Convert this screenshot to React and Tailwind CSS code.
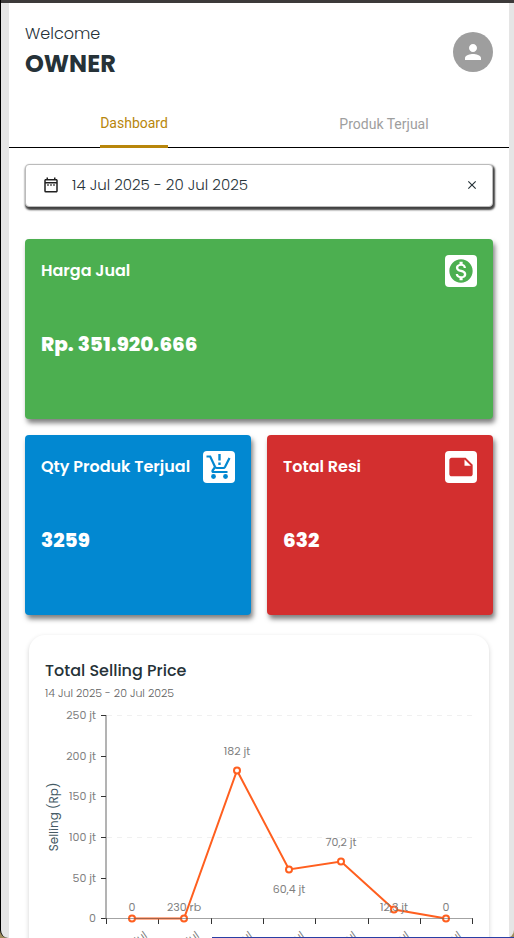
import React from "react";
import { MdPerson, MdMonetizationOn, MdNote, MdClose, MdOutlineDateRange } from "react-icons/md";

const points = [
  { x: 132, y: 918, label: "0", ly: 911 },
  { x: 184, y: 918, label: "230 rb", ly: 911 },
  { x: 237, y: 770, label: "182 jt", ly: 755 },
  { x: 289, y: 869, label: "60,4 jt", ly: 893 },
  { x: 341, y: 861, label: "70,2 jt", ly: 846 },
  { x: 394, y: 909, label: "12,3 jt", ly: 911 },
  { x: 446, y: 918, label: "0", ly: 911 },
];

const days = ["14 Jul", "15 Jul", "16 Jul", "17 Jul", "18 Jul", "19 Jul", "20 Jul"];

const yTicks = [
  { y: 715, label: "250 jt" },
  { y: 756, label: "200 jt" },
  { y: 796, label: "150 jt" },
  { y: 837, label: "100 jt" },
  { y: 878, label: "50 jt" },
  { y: 918, label: "0" },
];

const xTicks = [106, 158, 211, 263, 315, 368, 420, 472];

function OrderIcon() {
  return (
    <svg viewBox="0 0 32 32" className="size-8" fill="none" aria-hidden="true">
      <path d="M3.500 5.500H7.200L12 15.800Q12.600 17 13.800 17H20.300Q21.400 17 22 16L26.500 7" stroke="#0288d1" strokeWidth="2.200" />
      <path d="M11.800 16.500L9.600 19.500Q9 21 10.600 21H24.500" stroke="#0288d1" strokeWidth="2.200" strokeLinejoin="round" />
      <path d="M16.500 3V9.500M16.500 11.500V14" stroke="#0288d1" strokeWidth="2.400" />
      <circle cx="10.500" cy="25.500" r="2.400" fill="#0288d1" />
      <circle cx="22.500" cy="25.500" r="2.400" fill="#0288d1" />
    </svg>
  );
}

function StatCard({ title, value, color, children }) {
  return (
    <section className={`flex h-[180px] flex-col rounded-sm px-4 pt-4 text-white shadow-[2px_4px_5px_rgba(0,0,0,0.5)] ${color}`}>
      <div className="flex h-8 items-center justify-between">
        <h2 className="text-base font-semibold whitespace-nowrap">{title}</h2>
        <span className="flex size-8 shrink-0 items-center justify-center rounded-sm bg-white">{children}</span>
      </div>
      <p className="mt-[43px] text-xl leading-7 font-extrabold">{value}</p>
    </section>
  );
}

function SellingChart() {
  return (
    <svg viewBox="45 703 428 280" className="block w-full overflow-visible" role="img" aria-label="Total Selling Price">
      <g stroke="#f0f0f0" strokeDasharray="5 5">
        <path d="M107 715.500H472" />
        <path d="M107 837.500H472" />
      </g>
      <path d="M106 715V919" stroke="#b3b3b3" strokeWidth="2" />
      {yTicks.map((t) => (
        <g key={t.label}>
          <path d={`M101 ${t.y + 0.5}H106`} stroke="#333" />
          <text x="96" y={t.y + 4} textAnchor="end" fontSize="11" fill="#808080">{t.label}</text>
        </g>
      ))}
      {xTicks.map((x) => (
        <path key={x} d={`M${x + 0.5} 918V924`} stroke="#333" />
      ))}
      <text transform="translate(58 817) rotate(-90)" textAnchor="middle" fontSize="12" fill="#455a64">Selling (Rp)</text>
      {days.map((d, i) => (
        <text key={d} transform={`translate(${points[i].x + 16} 937) rotate(-35)`} textAnchor="end" fontSize="11" fill="#808080">{d}</text>
      ))}
      <polyline points={points.map((p) => `${p.x},${p.y + 0.5}`).join(" ")} fill="none" stroke="#ff5f1f" strokeWidth="2" />
      {points.map((p) => (
        <circle key={p.x} cx={p.x} cy={p.y + 0.5} r="3" fill="#fff" stroke="#ff5f1f" strokeWidth="2" />
      ))}
      <path d="M105 918.500H473" stroke="#666" strokeOpacity="0.6" />
      {points.map((p) => (
        <text key={p.x} x={p.x} y={p.ly} textAnchor="middle" fontSize="11" fill="#808080">{p.label}</text>
      ))}
    </svg>
  );
}

export default function App() {
  return (
    <div className="relative h-screen overflow-hidden bg-[#a08c5c] font-[Poppins,Inter,sans-serif] text-[#263238]">
      <div className="flex h-full flex-col overflow-hidden rounded-b-lg border-l border-l-black bg-[#e5e5e5]">
        <div className="h-[3px] shrink-0 bg-[#3c3a3a]" />
        <main className="mr-[5px] ml-2 min-h-0 flex-1 overflow-hidden bg-white">
          <header className="flex h-[97px] items-center justify-between px-4">
            <div>
              <p className="text-base leading-6 font-light">Welcome</p>
              <h1 className="text-2xl leading-9 font-bold">OWNER</h1>
            </div>
            <button aria-label="Profile" className="flex size-10 items-center justify-center rounded-full bg-[#9e9e9e] text-white">
              <MdPerson className="size-6" />
            </button>
          </header>
          <nav className="grid h-12 grid-cols-2 border-b border-black font-[Roboto,sans-serif] text-sm">
            <button className="-mb-px flex justify-center text-[#b8860b]">
              <span className="flex h-full items-center rounded-t-xs border-b-[3px] border-[#b8860b]">Dashboard</span>
            </button>
            <button className="flex items-center justify-center text-[#9e9e9e]">Produk Terjual</button>
          </nav>
          <div className="px-4 pt-4">
            <div className="flex h-[43px] items-center rounded-sm border border-[#bbb] bg-white pr-3 pb-px pl-4 shadow-[1px_2px_2px_1px_rgba(0,0,0,0.75)]">
              <MdOutlineDateRange className="size-[18px] text-[#212121]" />
              <input aria-label="Date range" readOnly value="14 Jul 2025 - 20 Jul 2025" className="ml-3 min-w-0 flex-1 text-[15px] leading-5 font-light outline-none" />
              <button aria-label="Clear" className="flex size-4 items-center justify-center">
                <MdClose className="size-3.5" />
              </button>
            </div>
            <div className="mt-8 grid grid-cols-2 gap-4">
              <div className="col-span-2">
                <StatCard title="Harga Jual" value="Rp. 351.920.666" color="bg-[#4caf50]">
                  <MdMonetizationOn className="size-7 text-[#4caf50]" />
                </StatCard>
              </div>
              <StatCard title="Qty Produk Terjual" value="3259" color="bg-[#0288d1]">
                <OrderIcon />
              </StatCard>
              <StatCard title="Total Resi" value="632" color="bg-[#d32f2f]">
                <MdNote className="size-7 text-[#d32f2f]" />
              </StatCard>
            </div>
            <section className="mx-1 mt-5 rounded-2xl px-4 pt-6 shadow-[0_2px_5px_rgba(0,0,0,0.18)]">
              <h2 className="text-base leading-6 font-medium">Total Selling Price</h2>
              <p className="text-[11px] leading-5 font-light text-[#616161]">14 Jul 2025 - 20 Jul 2025</p>
              <SellingChart />
            </section>
          </div>
        </main>
      </div>
      <div className="absolute right-0 bottom-0 left-[212px] h-px bg-[#2a3fa5]" />
    </div>
  );
}
